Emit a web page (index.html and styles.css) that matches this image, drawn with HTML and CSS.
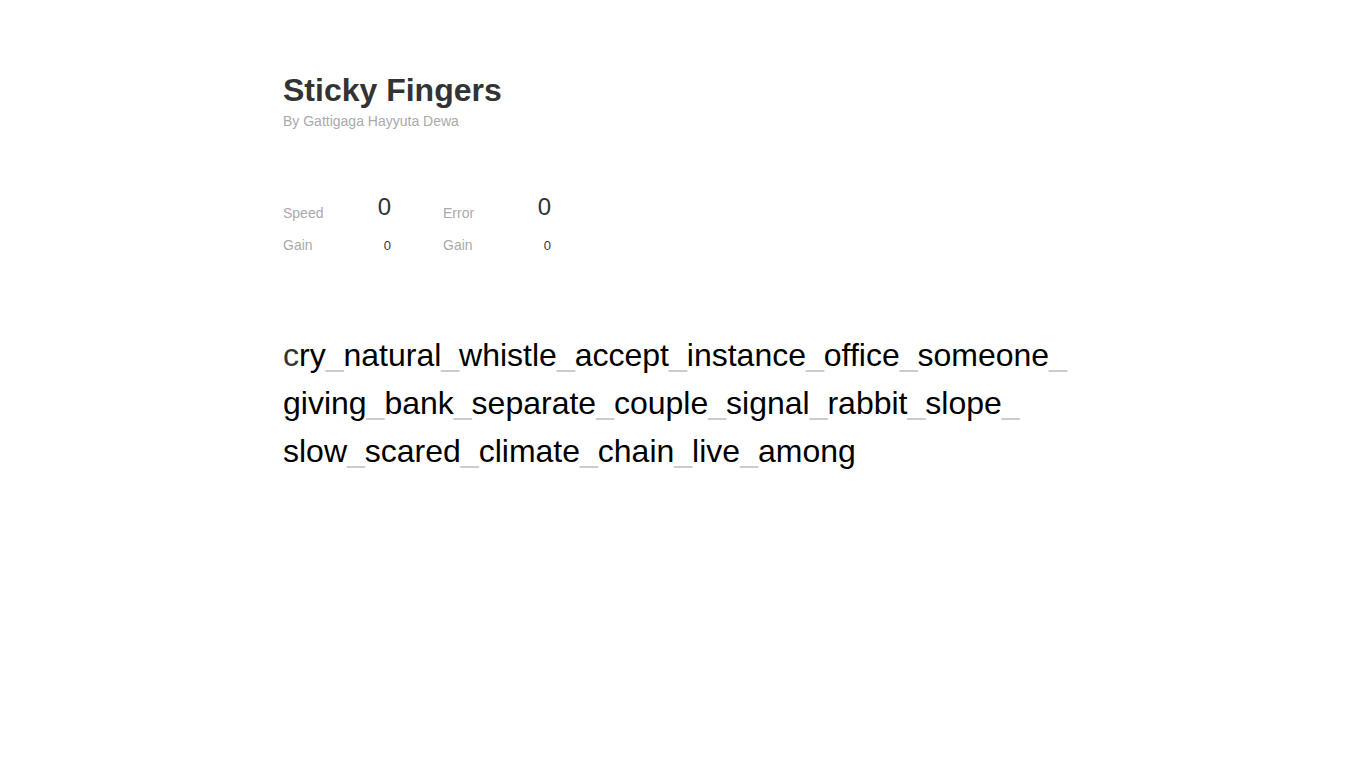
FILE: index.html
```html
<!DOCTYPE html>
<html>
<head>
<meta charset="utf-8">
<title>Sticky Fingers</title>
<link rel="stylesheet" href="styles.css">
</head>
<body>
<main class="container">
  <header class="header">
    <h1 class="title">Sticky Fingers</h1>
    <p class="author">By Gattigaga Hayyuta Dewa</p>
  </header>
  <section class="stats">
    <div class="stat">
      <div class="stat-row">
        <span class="label">Speed</span>
        <span class="value-big">0</span>
      </div>
      <div class="stat-row stat-row-gain">
        <span class="label">Gain</span>
        <span class="value-small">0</span>
      </div>
    </div>
    <div class="stat">
      <div class="stat-row">
        <span class="label">Error</span>
        <span class="value-big">0</span>
      </div>
      <div class="stat-row stat-row-gain">
        <span class="label">Gain</span>
        <span class="value-small">0</span>
      </div>
    </div>
  </section>
  <section class="words">
    <span class="word"><span class="current">c</span>ry<span class="sep">_</span></span>
    <span class="word">natural<span class="sep">_</span></span>
    <span class="word">whistle<span class="sep">_</span></span>
    <span class="word">accept<span class="sep">_</span></span>
    <span class="word">instance<span class="sep">_</span></span>
    <span class="word">office<span class="sep">_</span></span>
    <span class="word">someone<span class="sep">_</span></span>
    <span class="word">giving<span class="sep">_</span></span>
    <span class="word">bank<span class="sep">_</span></span>
    <span class="word">separate<span class="sep">_</span></span>
    <span class="word">couple<span class="sep">_</span></span>
    <span class="word">signal<span class="sep">_</span></span>
    <span class="word">rabbit<span class="sep">_</span></span>
    <span class="word">slope<span class="sep">_</span></span>
    <span class="word">slow<span class="sep">_</span></span>
    <span class="word">scared<span class="sep">_</span></span>
    <span class="word">climate<span class="sep">_</span></span>
    <span class="word">chain<span class="sep">_</span></span>
    <span class="word">live<span class="sep">_</span></span>
    <span class="word">among</span>
  </section>
</main>
</body>
</html>
```
FILE: styles.css
```css
html, body {
  margin: 0;
  padding: 0;
  background: #fff;
}
body {
  font-family: "Liberation Sans", Arial, sans-serif;
  color: #333;
}
.container {
  width: 800px;
  margin: 0 auto;
  padding-top: 72px;
}
.header {
  display: flex;
  flex-direction: column;
  gap: 4px;
}
.title {
  margin: 0;
  font-size: 32px;
  font-weight: bold;
  line-height: 37px;
  color: #333;
}
.author {
  margin: 0;
  font-size: 14px;
  line-height: 16px;
  color: #aaa;
}
.stats {
  display: grid;
  grid-template-columns: 108px 108px;
  column-gap: 52px;
  margin-top: 64px;
}
.stat {
  display: flex;
  flex-direction: column;
}
.stat-row {
  display: flex;
  justify-content: space-between;
  align-items: flex-end;
}
.stat-row-gain {
  margin-top: 16px;
  align-items: baseline;
}
.label {
  font-size: 14px;
  line-height: 16px;
  color: #aaa;
}
.value-big {
  font-size: 24px;
  line-height: 28px;
  color: #333;
}
.value-small {
  font-size: 13px;
  line-height: 15px;
  color: #333;
}
.words {
  display: flex;
  flex-wrap: wrap;
  margin-top: 78px;
  font-size: 32px;
  line-height: 48px;
  color: #000;
}
.word {
  white-space: nowrap;
}
.current {
  color: #333;
}
.sep {
  color: #ccc;
}
```
